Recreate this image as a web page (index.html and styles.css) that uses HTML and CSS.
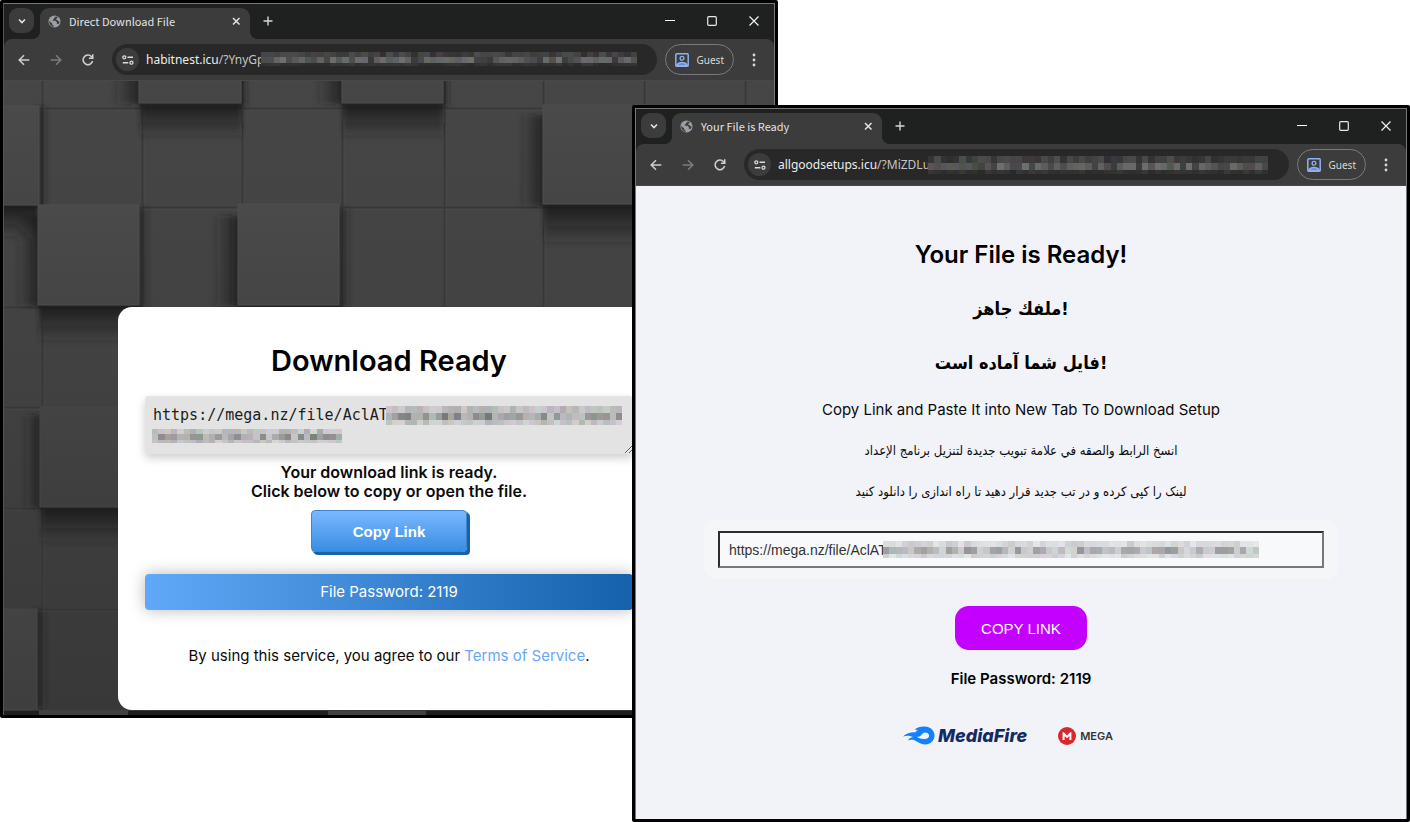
FILE: index.html
```
<!DOCTYPE html>
<html lang="en">
<head>
<meta charset="utf-8">
<title>Download pages</title>
<link rel="stylesheet" href="styles.css">
</head>
<body>
<svg class="sprite" aria-hidden="true">
  <symbol id="i-chevron" viewBox="0 0 10 10"><path d="M2 3.5l3 3 3-3" fill="none" stroke="#e3e3e3" stroke-width="1.6"/></symbol>
  <symbol id="i-globe" viewBox="0 0 14 14"><circle cx="7" cy="7" r="6.5" fill="#9aa0a6"/><path d="M1.200 6.200l3.300 3v1.300l1.600 1.200v1.100C3.200 12.400 1.100 10 1.200 6.200zM8.200 1.300l-.4 1.300-1.500.4.2 1.500-1.300.3-.2 1.400h3l1.600 1.500-.2 1.400 1.500.9c1-.7 1.500-1.800 1.600-3l-1.800-.5-.6-1.300-1.700-.2.8-1.300 1.400-.6C10 2 9.200 1.500 8.200 1.300z" fill="#3c3c3c"/></symbol>
  <symbol id="i-close" viewBox="0 0 10 10"><path d="M2 2l6.500 6.500M8.500 2L2 8.500" fill="none" stroke="#e3e3e3" stroke-width="1.500"/></symbol>
  <symbol id="i-plus" viewBox="0 0 10 10"><path d="M5 .5v9M.5 5h9" fill="none" stroke="#d5d5d5" stroke-width="1.400"/></symbol>
  <symbol id="i-min" viewBox="0 0 10 10"><path d="M0 4.500h10" stroke="#fff" stroke-width="1"/></symbol>
  <symbol id="i-max" viewBox="0 0 10 10"><rect x=".7" y=".7" width="8.600" height="8.600" rx="1" fill="none" stroke="#e8e8e8" stroke-width="1.200"/></symbol>
  <symbol id="i-x" viewBox="0 0 10 10"><path d="M.5.5l9 9M9.500.5l-9 9" stroke="#f0f0f0" stroke-width="1.200"/></symbol>
  <symbol id="i-back" viewBox="0 0 12 12"><path d="M11.300 6H1.500M6 1.200L1.200 6 6 10.800" fill="none" stroke="currentColor" stroke-width="1.500"/></symbol>
  <symbol id="i-forward" viewBox="0 0 12 12"><path d="M.7 6h9.800M6 1.200L10.800 6 6 10.800" fill="none" stroke="currentColor" stroke-width="1.500"/></symbol>
  <symbol id="i-reload" viewBox="0 0 12 12"><path d="M10.600 7A4.800 4.800 0 1 1 9.600 2.800L10.900 4" fill="none" stroke="currentColor" stroke-width="1.500"/><path d="M11.500.3v4.600H6.900V3.500h3.100V.3z" fill="currentColor"/></symbol>
  <symbol id="i-tune" viewBox="0 0 12 10"><circle cx="2.300" cy="2.300" r="1.500" fill="none" stroke="#dcdcdc" stroke-width="1.300"/><path d="M5.500 2.300H11M.8 7.700h5.500" stroke="#dcdcdc" stroke-width="1.400"/><circle cx="9.500" cy="7.700" r="1.500" fill="none" stroke="#dcdcdc" stroke-width="1.300"/></symbol>
  <symbol id="i-guest" viewBox="0 0 14 14"><rect x=".8" y=".8" width="12.400" height="12.400" rx="1" fill="none" stroke="#8fb1ee" stroke-width="1.500"/><circle cx="7" cy="5.300" r="1.900" fill="none" stroke="#8fb1ee" stroke-width="1.300"/><path d="M1.500 12.500c2.500-4 8.500-4 11 0z" fill="#5f7db2" stroke="#8fb1ee" stroke-width="1.300"/></symbol>
  <symbol id="i-dots" viewBox="0 0 4 14"><circle cx="2" cy="2" r="1.400" fill="#d8d8d8"/><circle cx="2" cy="7" r="1.400" fill="#d8d8d8"/><circle cx="2" cy="12" r="1.400" fill="#d8d8d8"/></symbol>
</svg>

<main class="desktop">
  <section class="window window-back" aria-label="Direct Download File">
    <div class="frame">
      <header class="titlebar">
        <button class="tab-search" aria-label="Search tabs"><svg class="ic10"><use href="#i-chevron"/></svg></button>
        <div class="tab">
          <svg class="ic13"><use href="#i-globe"/></svg>
          <span class="tab-title">Direct Download File</span>
          <button class="bare" aria-label="Close tab"><svg class="ic10"><use href="#i-close"/></svg></button>
        </div>
        <button class="bare new-tab" aria-label="New tab"><svg class="ic10"><use href="#i-plus"/></svg></button>
        <div class="controls">
          <button class="bare" aria-label="Minimize"><svg class="ic10"><use href="#i-min"/></svg></button>
          <button class="bare" aria-label="Maximize"><svg class="ic10"><use href="#i-max"/></svg></button>
          <button class="bare" aria-label="Close"><svg class="ic10"><use href="#i-x"/></svg></button>
        </div>
      </header>
      <nav class="toolbar">
        <button class="bare" aria-label="Back"><svg class="ic12"><use href="#i-back"/></svg></button>
        <button class="bare dim" aria-label="Forward"><svg class="ic12"><use href="#i-forward"/></svg></button>
        <button class="bare" aria-label="Reload"><svg class="ic12"><use href="#i-reload"/></svg></button>
        <div class="omnibox">
          <span class="tune"><svg class="ic12"><use href="#i-tune"/></svg></span>
          <span class="url">habitnest.icu<span class="path">/?YnyGp</span></span>
          <svg class="mosaic mosaic-url" data-tone="dark" data-cols="60" data-seed="7" preserveAspectRatio="none"></svg>
        </div>
        <button class="guest"><svg class="ic14"><use href="#i-guest"/></svg>Guest</button>
        <button class="bare" aria-label="Menu"><svg class="dots"><use href="#i-dots"/></svg></button>
      </nav>
      <div class="page page-download">
        <svg class="blocks" viewBox="0 0 772 634" preserveAspectRatio="xMidYMin slice" aria-hidden="true">
          <defs>
            <linearGradient id="base" x1="0" y1="0" x2="0" y2="1"><stop offset="0" stop-color="#464646"/><stop offset=".4" stop-color="#424242"/><stop offset="1" stop-color="#383838"/></linearGradient>
            <linearGradient id="face" x1="0" y1="0" x2="0" y2="1"><stop offset="0" stop-color="#4a4a4a"/><stop offset="1" stop-color="#454545"/></linearGradient>
            <linearGradient id="face2" x1="0" y1="0" x2="0" y2="1"><stop offset="0" stop-color="#434343"/><stop offset="1" stop-color="#3e3e3e"/></linearGradient>
            <linearGradient id="down" x1="0" y1="0" x2="0" y2="1"><stop offset="0" stop-color="#161616" stop-opacity=".95"/><stop offset=".35" stop-color="#1c1c1c" stop-opacity=".65"/><stop offset="1" stop-color="#222" stop-opacity="0"/></linearGradient>
            <linearGradient id="left" x1="1" y1="0" x2="0" y2="0"><stop offset="0" stop-color="#181818" stop-opacity=".95"/><stop offset=".35" stop-color="#1c1c1c" stop-opacity=".45"/><stop offset="1" stop-color="#222" stop-opacity="0"/></linearGradient>
            <linearGradient id="right" x1="0" y1="0" x2="1" y2="0"><stop offset="0" stop-color="#181818" stop-opacity=".9"/><stop offset="1" stop-color="#222" stop-opacity="0"/></linearGradient>
            <filter id="soft" x="-20%" y="-20%" width="140%" height="140%"><feGaussianBlur stdDeviation="2.500"/></filter>
          </defs>
          <rect width="772" height="634" fill="url(#base)"/>
          <path d="M39.500 0v634M139.500 0v634M239.500 0v634M339.500 0v634M441.500 0v634M540.500 0v634M641.500 0v634M742.500 0v634M0 27.500h772M0 126.500h772M0 226.500h772M0 326.500h772M0 427.500h772M0 528.500h772" stroke="#373737" stroke-width="1.500"/>
          <path d="M41.500 0v634M141.500 0v634M241.500 0v634M341.500 0v634M443.500 0v634M542.500 0v634M643.500 0v634M0 29.500h772M0 128.500h772M0 328.500h772M0 429.500h772M0 530.500h772" stroke="#505050" stroke-opacity=".25"/>
          <g filter="url(#soft)">
            <g fill="url(#down)"><rect x="137" y="20" width="102" height="40"/><rect x="340" y="20" width="100" height="40"/><rect x="-10" y="122" width="46" height="38"/><rect x="541" y="121" width="102" height="46"/><rect x="36" y="222" width="102" height="42"/><rect x="236" y="222" width="102" height="32"/><rect x="38" y="424" width="100" height="42"/></g>
            <g fill="url(#left)"><rect x="108" y="-10" width="30" height="33"/><rect x="311" y="-10" width="30" height="33"/><rect x="515" y="34" width="27" height="91"/><rect x="12" y="135" width="25" height="90"/><rect x="209" y="135" width="28" height="90"/><rect x="19" y="334" width="20" height="93"/></g>
            <g fill="url(#right)"><rect x="235" y="-10" width="11" height="35"/><rect x="437" y="-10" width="11" height="35"/><rect x="34" y="26" width="11" height="99"/><rect x="133" y="127" width="14" height="98"/><rect x="334" y="127" width="14" height="98"/><rect x="31" y="529" width="13" height="98"/></g>
          </g>
          <g fill="url(#face)" stroke="#4e4e4e" stroke-width="1"><rect x="136" y="-60" width="102" height="82"/><rect x="339" y="-60" width="101" height="82"/><rect x="-60" y="25" width="96" height="99"/><rect x="540" y="24" width="102" height="99"/><rect x="35" y="124" width="101" height="100"/><rect x="235" y="123" width="101" height="101"/></g>
          <g fill="url(#face2)" stroke="#464646" stroke-width="1"><rect x="37" y="326" width="101" height="100"/><rect x="-60" y="528" width="94" height="100"/></g>
          <path d="M0 630h772v4H0z" fill="#1e1e1e"/><path d="M36 629h89v5H36zM325 630h98v4h-98z" fill="#414141"/>
        </svg>
        <article class="card">
          <h1>Download Ready</h1>
          <div class="link-box">
            <textarea class="link-area" aria-label="Download link" readonly>https://mega.nz/file/AclAT</textarea>
            <svg class="mosaic mosaic-line1" data-tone="grey" data-cols="38" data-seed="21" preserveAspectRatio="none"></svg>
            <svg class="mosaic mosaic-line2" data-tone="grey" data-cols="30" data-seed="45" preserveAspectRatio="none"></svg>
          </div>
          <p class="ready">Your download link is ready.<br>Click below to copy or open the file.</p>
          <button class="copy-blue">Copy Link</button>
          <p class="password-bar">File Password: 2119</p>
          <p class="terms">By using this service, you agree to our <a href="#">Terms of Service</a>.</p>
        </article>
      </div>
    </div>
  </section>

  <section class="window window-front" aria-label="Your File is Ready">
    <div class="frame">
      <header class="titlebar">
        <button class="tab-search" aria-label="Search tabs"><svg class="ic10"><use href="#i-chevron"/></svg></button>
        <div class="tab">
          <svg class="ic13"><use href="#i-globe"/></svg>
          <span class="tab-title">Your File is Ready</span>
          <button class="bare" aria-label="Close tab"><svg class="ic10"><use href="#i-close"/></svg></button>
        </div>
        <button class="bare new-tab" aria-label="New tab"><svg class="ic10"><use href="#i-plus"/></svg></button>
        <div class="controls">
          <button class="bare" aria-label="Minimize"><svg class="ic10"><use href="#i-min"/></svg></button>
          <button class="bare" aria-label="Maximize"><svg class="ic10"><use href="#i-max"/></svg></button>
          <button class="bare" aria-label="Close"><svg class="ic10"><use href="#i-x"/></svg></button>
        </div>
      </header>
      <nav class="toolbar">
        <button class="bare" aria-label="Back"><svg class="ic12"><use href="#i-back"/></svg></button>
        <button class="bare dim" aria-label="Forward"><svg class="ic12"><use href="#i-forward"/></svg></button>
        <button class="bare" aria-label="Reload"><svg class="ic12"><use href="#i-reload"/></svg></button>
        <div class="omnibox">
          <span class="tune"><svg class="ic12"><use href="#i-tune"/></svg></span>
          <span class="url">allgoodsetups.icu<span class="path">/?MiZDLu</span></span>
          <svg class="mosaic mosaic-url mosaic-url-front" data-tone="dark" data-cols="54" data-seed="12" preserveAspectRatio="none"></svg>
        </div>
        <button class="guest"><svg class="ic14"><use href="#i-guest"/></svg>Guest</button>
        <button class="bare" aria-label="Menu"><svg class="dots"><use href="#i-dots"/></svg></button>
      </nav>
      <div class="page page-ready">
        <h1>Your File is Ready!</h1>
        <h2 lang="ar">ملفك جاهز!</h2>
        <h2 lang="fa">فایل شما آماده است!</h2>
        <p class="lead">Copy Link and Paste It into New Tab To Download Setup</p>
        <p class="script" lang="ar">انسخ الرابط والصقه في علامة تبويب جديدة لتنزيل برنامج الإعداد</p>
        <p class="script" lang="fa">لینک را کپی کرده و در تب جدید قرار دهید تا راه اندازی را دانلود کنید</p>
        <div class="field">
          <input class="link-input" type="text" aria-label="File link" value="https://mega.nz/file/AclAT" readonly>
          <svg class="mosaic mosaic-input" data-tone="light" data-cols="60" data-seed="33" preserveAspectRatio="none"></svg>
        </div>
        <button class="copy-violet">COPY LINK</button>
        <p class="password">File Password: 2119</p>
        <div class="logos">
          <div class="logo">
            <svg class="flame" viewBox="0 0 32 20" aria-hidden="true"><path d="M0 10.500C4 6.500 9 5.800 13 6.300 12 5 13.500 4.800 15 4.500 13.500 3.600 12.500 3.700 11.500 3.500 15 .5 20 0 24 .8c4.500 1 7.500 4.500 7.500 9s-4 8.700-9.200 8.700c-6 0-8.800-4.500-12.800-4.800-2-.1-3.500.3-4.500.8C6 12 8.500 11.200 10 11 6.500 9.400 3.500 9.300 0 10.500z" fill="#1281ff"/><path d="M13.800 10.800c2.200 1.500 4.800 2.400 7.800 2.200 2.700-.2 4.500-1.400 4.500-3.300S24.500 6.400 22.300 6.400c-2.300 0-3.100 1.600-4.200 2.800-1.100 1.200-2.400 1.700-4.300 1.600z" fill="#f2f3f8"/></svg>
            <span class="mediafire">MediaFire</span>
          </div>
          <div class="logo logo-mega">
            <svg class="mega-mark" viewBox="0 0 18 18" aria-hidden="true"><circle cx="9" cy="9" r="9" fill="#d9272e"/><path d="M4.600 13V5.300h1.300L9 8.500l3.100-3.200h1.300V13h-2V8.900L9 11.300 6.600 8.900V13z" fill="#fff"/></svg>
            <span class="mega">MEGA</span>
          </div>
        </div>
      </div>
    </div>
  </section>
</main>
<script src="mosaic.js"></script>
</body>
</html>
```
FILE: styles.css
```
* { box-sizing: border-box; }
body { margin: 0; background: #fff; font-family: Inter, sans-serif; color: #0b0b0b; }
h1, h2, p { margin: 0; }
button { font: inherit; cursor: pointer; }
svg { display: block; }
.sprite { position: absolute; width: 0; height: 0; }

.desktop { display: grid; grid-template-columns: 632fr 146fr 632fr; align-items: start; }
.window { border: 3px solid #000; border-radius: 2px; grid-row: 1; min-width: 0; }
.window-back { grid-column: 1 / 3; }
.window-front { grid-column: 2 / 4; margin-top: 105px; z-index: 1; }
.frame { border: 1px solid #777; border-bottom: 0; background: #1f2120; overflow: hidden; }
.window-back .frame { border-left-color: #555; }

.titlebar { display: flex; height: 35px; padding: 4px 15px 0 5px; font-family: "Noto Sans", sans-serif; }
.bare { display: flex; padding: 0; border: 0; background: none; color: #d0d0d0; }
.dim { color: #7c7c7c; }
.ic10 { width: 10px; height: 10px; }
.ic12 { width: 12px; height: 12px; }
.ic13 { width: 13px; height: 13px; }
.ic14 { width: 14px; height: 14px; }
.tab-search { display: flex; align-items: center; justify-content: center; width: 25px; height: 25px; padding: 0; border: 0; border-radius: 9px; background: #3c3c3c; }
.tab { position: relative; display: flex; align-items: center; gap: 8px; width: 210px; height: 31px; margin-left: 6px; padding: 0 9px 5px 8px; border-radius: 9px 9px 0 0; background: #3c3c3c; }
.tab::before, .tab::after { content: ""; position: absolute; bottom: 0; width: 8px; height: 8px; }
.tab::before { right: 100%; background: radial-gradient(circle at 0 0, transparent 8px, #3c3c3c 8px); }
.tab::after { left: 100%; background: radial-gradient(circle at 100% 0, transparent 8px, #3c3c3c 8px); }
.tab-title { flex: 1; font-family: "Noto Sans CJK KR", sans-serif; font-size: 11px; line-height: 16px; color: #e3e3e3; white-space: nowrap; }
.new-tab { align-items: center; height: 25px; margin-left: 13px; }
.controls { display: flex; align-items: center; gap: 32px; height: 25px; margin-left: auto; }

.toolbar { display: flex; align-items: center; height: 42px; padding: 0 18px 0 14px; border-radius: 8px 8px 0 0; background: #3c3c3c; border-bottom: 1px solid #484848; }
.toolbar > .bare + .bare { margin-left: 20px; }
.omnibox { position: relative; display: flex; flex: 1; align-items: center; height: 31px; margin-left: 18px; padding-left: 4px; border-radius: 16px; background: #282828; }
.tune { display: flex; align-items: center; justify-content: center; width: 23px; height: 23px; border-radius: 50%; background: #3c3c3c; }
.url { margin-left: 7px; font-family: "Noto Sans", sans-serif; font-size: 12px; line-height: 18px; color: #ececec; white-space: nowrap; }
.path { color: #c4c4c4; }
.guest { display: flex; align-items: center; gap: 8px; height: 31px; margin: 0 18px 0 8px; padding: 0 9px; border: 1px solid #7a7a7a; border-radius: 16px; background: none; font-family: "Noto Sans", sans-serif; font-size: 10px; color: #d8d8d8; }
.dots { width: 4px; height: 14px; }

.mosaic { position: absolute; }
.mosaic-url { top: 8px; left: 149px; width: 376px; height: 14px; }
.mosaic-url-front { left: 184px; width: 340px; height: 18px; top: 7px; }

.page-download { position: relative; padding: 226px 0 5px; }
.blocks { position: absolute; inset: 0; width: 100%; height: 100%; }
.card { position: relative; display: flex; flex-direction: column; max-width: 542px; margin: 0 auto; padding: 36px 27px 44px; border-radius: 14px; background: #fff; text-align: center; }
.card h1 { font-size: 29px; line-height: 36px; font-weight: 600; color: #000; }
.link-box { position: relative; margin-top: 17px; }
.link-area { display: block; width: 100%; height: 58px; padding: 9px 8px; border: 0; border-radius: 4px; background: #e3e3e3; box-shadow: 0 4px 10px rgba(0, 0, 0, .2); font-family: "DejaVu Sans Mono", monospace; font-size: 15px; line-height: 21px; color: #1c1c1c; outline: 0; }
.mosaic-line1 { top: 10px; left: 241px; width: 236px; height: 19px; }
.mosaic-line2 { top: 33px; left: 7px; width: 190px; height: 14px; }
.ready { margin-top: 9px; font-size: 16px; line-height: 19px; font-weight: 600; }
.copy-blue { align-self: center; width: 156px; height: 42px; margin-top: 9px; padding: 0; border: 1px solid #3f86cf; border-radius: 4px; background: linear-gradient(#7ab8ff, #3a8de4); box-shadow: 1px 1px 0 #1663ac, 2px 2px 0 #1663ac, 3px 3px 0 #1663ac; font-family: "Liberation Sans", sans-serif; font-size: 15px; font-weight: 700; color: #fff; }
.password-bar { margin-top: 22px; border-radius: 4px; background: linear-gradient(90deg, #60a9f8, #1561ab); box-shadow: 0 0 16px rgba(0, 0, 0, .28); font-size: 15px; line-height: 36px; color: #fff; }
.terms { margin-top: 36px; font-size: 15px; line-height: 20px; }
.terms a { color: #6aa5fb; text-decoration: none; }

.page-ready { display: flex; flex-direction: column; align-items: center; padding: 51px 20px 73px; background: #f2f3f8; text-align: center; }
.page-ready h1 { font-size: 24px; line-height: 36px; font-weight: 600; color: #000; }
.page-ready h2 { margin-top: 18px; font-family: "DejaVu Sans Condensed", "DejaVu Sans", sans-serif; font-size: 18px; line-height: 36px; font-weight: 700; color: #000; }
.lead, .script { margin-top: 17px; font-size: 15px; line-height: 24px; }
.script { font-family: "DejaVu Sans Condensed", "DejaVu Sans", sans-serif; font-size: 13px; }
.field { position: relative; width: 100%; max-width: 634px; margin-top: 16px; padding: 11px 14px; border-radius: 12px; background: #f5f6f8; }
.link-input { display: block; width: 100%; height: 37px; padding: 0 9px; border: 2px solid; border-color: #2b2c2e #77787a #77787a #2b2c2e; background: #f8f9fb; font-family: "Liberation Sans", sans-serif; font-size: 14px; color: #333; outline: 0; }
.mosaic-input { top: 21px; left: 179px; width: 376px; height: 17px; }
.copy-violet { width: 132px; height: 44px; margin-top: 27px; padding: 0; border: 0; border-radius: 14px; background: #c400ff; font-family: "Liberation Sans", sans-serif; font-size: 15px; color: #fff; }
.password { margin-top: 17px; font-size: 15px; line-height: 24px; font-weight: 600; color: #000; }
.logos { display: flex; align-items: center; gap: 31px; height: 20px; margin-top: 35px; }
.logo { display: flex; align-items: center; gap: 3px; }
.flame { width: 32px; height: 20px; }
.mediafire { font-size: 18px; line-height: 20px; font-weight: 800; font-style: italic; color: #142a66; }
.logo-mega { gap: 4px; padding-right: 26px; }
.mega-mark { width: 18px; height: 18px; }
.mega { font-size: 11px; line-height: 20px; font-weight: 600; color: #333; }
```
FILE: mosaic.js
```
// Paints the pixelated redaction strips: three rows of cells per strip.
const tones = {
  dark: { base: [40, 40, 40], rows: [36, 72, 16], tint: 8 },
  grey: { base: [224, 224, 224], rows: [-50, -100, -46], tint: 14 },
  light: { base: [238, 239, 242], rows: [-36, -90, -36], tint: 10 }
};
const NS = "http://www.w3.org/2000/svg";

document.querySelectorAll(".mosaic").forEach((svg) => {
  const tone = tones[svg.dataset.tone];
  const cols = Number(svg.dataset.cols);
  let state = Number(svg.dataset.seed);
  const next = () => {
    state = (state * 16807) % 2147483647;
    return state / 2147483647;
  };
  for (let i = 0; i < 8; i++) next();
  const heights = [6, 6, 4];
  svg.setAttribute("viewBox", `0 0 ${cols * 6} 16`);
  svg.setAttribute("shape-rendering", "crispEdges");
  let y = 0;
  heights.forEach((h, row) => {
    for (let c = 0; c < cols; c++) {
      const depth = tone.rows[row] * (0.25 + 0.75 * next());
      const rgb = tone.base.map((v) => Math.round(v + depth + (next() - 0.5) * tone.tint));
      const cell = document.createElementNS(NS, "rect");
      cell.setAttribute("x", c * 6);
      cell.setAttribute("y", y);
      cell.setAttribute("width", 6);
      cell.setAttribute("height", h);
      cell.setAttribute("fill", `rgb(${rgb.join(",")})`);
      svg.appendChild(cell);
    }
    y += h;
  });
});
```
